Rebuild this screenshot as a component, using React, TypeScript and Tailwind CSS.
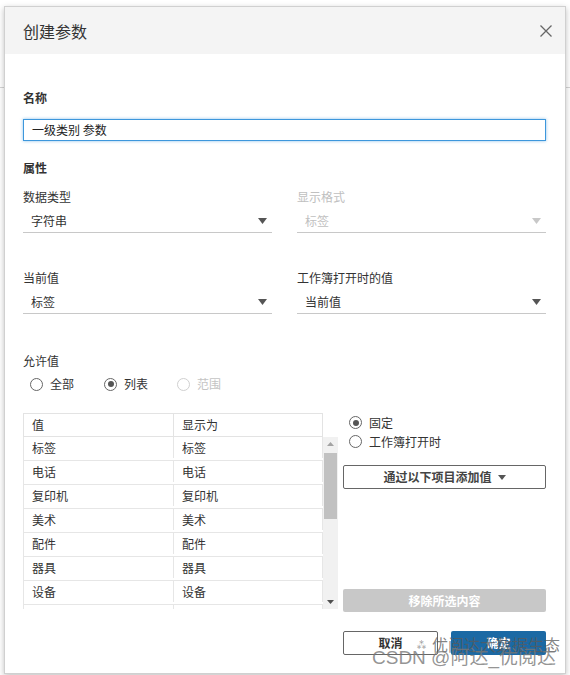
import React from "react";

const rows = ["标签", "电话", "复印机", "美术", "配件", "器具", "设备", "收纳具"];

function Radio({ checked, disabled, label }: { checked?: boolean; disabled?: boolean; label: string }) {
  return (
    <div className="flex items-center gap-[7px]">
      <span
        className={`flex h-[13px] w-[13px] items-center justify-center rounded-full border ${
          disabled ? "border-[#d0d0d0]" : "border-[#666]"
        }`}
      >
        {checked && <span className="h-[6px] w-[6px] rounded-full bg-[#555]" />}
      </span>
      <span className={disabled ? "text-[#c4c4c4]" : "text-[#333]"}>{label}</span>
    </div>
  );
}

function Caret({ light }: { light?: boolean }) {
  return (
    <svg width="9" height="6" viewBox="0 0 9 6">
      <path d="M0 0h9L4.5 6z" fill={light ? "#c8c8c8" : "#555"} />
    </svg>
  );
}

function Select({ value, disabled }: { value: string; disabled?: boolean }) {
  return (
    <div className="mt-[4px] flex h-[24px] items-center justify-between border-b border-[#c8c8c8] pl-2 pr-[5px]">
      <span className={disabled ? "text-[#c0c0c0]" : "text-[#333]"}>{value}</span>
      <Caret light={disabled} />
    </div>
  );
}

function Label({ children, muted, bold }: { children: React.ReactNode; muted?: boolean; bold?: boolean }) {
  return (
    <div className={`h-4 leading-4 ${bold ? "font-bold text-[#222]" : ""} ${muted ? "text-[#c0c0c0]" : "text-[#333]"}`}>
      {children}
    </div>
  );
}

export default function App() {
  return (
    <div
      className="relative h-[675px] w-[570px] overflow-hidden bg-white text-[12px]"
      style={{ fontFamily: '"Noto Sans CJK SC", "Noto Sans", sans-serif' }}
    >
      {/* page behind the modal */}
      <div className="h-[88px] border-b border-[#d4d4d4]" />

      <div className="absolute left-[4px] top-[6px] flex w-[562px] flex-col border border-[#d0d0d0] bg-white shadow-[0_2px_6px_rgba(0,0,0,0.25)]">
        <div className="flex h-[47px] items-center justify-between bg-[#f4f4f4] pl-[18px] pr-[13px]">
          <span className="text-[16px] text-[#333]">创建参数</span>
          <svg width="12" height="12" viewBox="0 0 12 12">
            <path d="M0.5 0.5l11 11M11.5 0.5l-11 11" stroke="#666" strokeWidth="1.3" />
          </svg>
        </div>

        <div className="flex flex-col pb-[18px] pl-[18px] pr-[19px] pt-[36px]">
          <Label bold>名称</Label>
          <div className="mt-[13px] flex h-[22px] items-center border border-[#3d97dc] pl-2 text-[#222] shadow-[0_0_3px_rgba(61,151,220,0.6)]">
            一级类别 参数
          </div>

          <div className="mt-[19px]">
            <Label bold>属性</Label>
          </div>

          <div className="mt-[13px] grid grid-cols-2 gap-x-[25px]">
            <div>
              <Label>数据类型</Label>
              <Select value="字符串" />
            </div>
            <div>
              <Label muted>显示格式</Label>
              <Select value="标签" disabled />
            </div>
          </div>

          <div className="mt-[37px] grid grid-cols-2 gap-x-[25px]">
            <div>
              <Label>当前值</Label>
              <Select value="标签" />
            </div>
            <div>
              <Label>工作簿打开时的值</Label>
              <Select value="当前值" />
            </div>
          </div>

          <div className="mt-[39px]">
            <Label>允许值</Label>
          </div>
          <div className="mt-[7px] flex h-4 items-center pl-[7px]">
            <div className="w-[74px]">
              <Radio label="全部" />
            </div>
            <div className="w-[73px]">
              <Radio label="列表" checked />
            </div>
            <Radio label="范围" disabled />
          </div>

          <div className="mt-[21px] flex gap-[5px]">
            <div className="w-[315px]">
              <div className="flex h-[24px] w-[300px] border border-[#e3e3e3] text-[#333]">
                <div className="flex w-[150px] items-center border-r border-[#e3e3e3] pl-2">值</div>
                <div className="flex flex-1 items-center pl-2">显示为</div>
              </div>
              <div className="flex h-[172px]">
                <div className="w-[300px] overflow-hidden">
                  {rows.map((r) => (
                    <div key={r} className="flex h-[24px] border-b border-l border-[#e6e6e6] pb-[2px] text-[#333]">
                      <div className="flex w-[150px] items-center border-r border-[#e6e6e6] pl-2">{r}</div>
                      <div className="flex flex-1 items-center border-r border-[#e6e6e6] pl-2">{r}</div>
                    </div>
                  ))}
                </div>
                <div className="flex w-[15px] flex-col items-center bg-[#f1f1f1]">
                  <div className="flex h-[14px] items-center">
                    <svg width="7" height="4" viewBox="0 0 7 4">
                      <path d="M0 4h7L3.5 0z" fill="#a3a3a3" />
                    </svg>
                  </div>
                  <div className="mt-[2px] h-[66px] w-[13px] bg-[#c1c1c1]" />
                  <div className="flex-1" />
                  <div className="flex h-[14px] items-center">
                    <svg width="7" height="4" viewBox="0 0 7 4">
                      <path d="M0 0h7L3.5 4z" fill="#505050" />
                    </svg>
                  </div>
                </div>
              </div>
            </div>

            <div className="flex flex-1 flex-col">
              <div className="flex h-[19px] items-center pl-[6px]">
                <Radio label="固定" checked />
              </div>
              <div className="flex h-[19px] items-center pl-[6px]">
                <Radio label="工作簿打开时" />
              </div>
              <button className="mt-[14px] flex h-[24px] items-center justify-center gap-[6px] rounded-[2px] border border-[#666] font-bold text-[#444]">
                通过以下项目添加值
                <svg width="8" height="5" viewBox="0 0 8 5">
                  <path d="M0 0h8L4 5z" fill="#555" />
                </svg>
              </button>
              <button className="mt-[100px] flex h-[23px] items-center justify-center rounded-[2px] bg-[#c8c8c8] font-bold text-white">
                移除所选内容
              </button>
            </div>
          </div>

          <div className="mt-[19px] flex justify-end gap-[13px]">
            <button className="h-[24px] w-[95px] rounded-[2px] border border-[#666] font-bold text-[#333]">取消</button>
            <button className="h-[24px] w-[95px] rounded-[2px] bg-[#1b69a4] font-bold text-white">确定</button>
          </div>
        </div>
      </div>

      {/* watermark */}
      <div className="pointer-events-none absolute left-[416px] top-[632px] flex items-center gap-[5px] text-[16px] text-[rgba(90,90,90,0.75)]">
        <span className="text-[11px]">⁂</span>
        <span>优阅达大数据生态</span>
      </div>
      <div
        className="pointer-events-none absolute left-[372px] top-[644px] text-[19px] text-[rgba(120,120,120,0.8)]"
        style={{ fontFamily: '"Liberation Sans", "Noto Sans CJK SC", sans-serif' }}
      >
        CSDN @阿达_优阅达
      </div>
    </div>
  );
}
